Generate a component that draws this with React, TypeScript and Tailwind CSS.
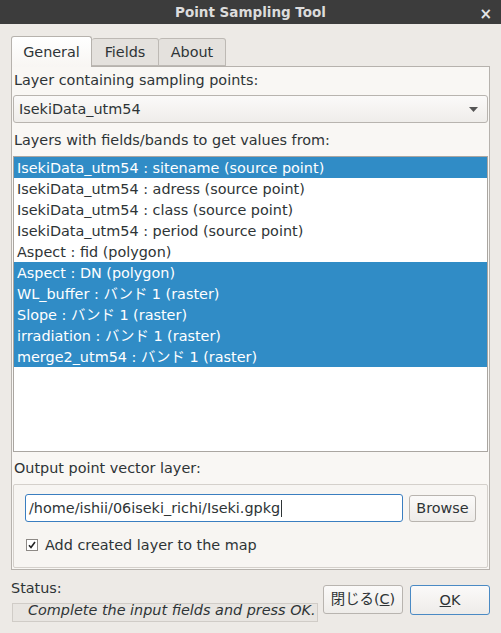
import React from "react";

const ITEMS: { label: string; selected: boolean }[] = [
  { label: "IsekiData_utm54 : sitename (source point)", selected: true },
  { label: "IsekiData_utm54 : adress (source point)", selected: false },
  { label: "IsekiData_utm54 : class (source point)", selected: false },
  { label: "IsekiData_utm54 : period (source point)", selected: false },
  { label: "Aspect : fid (polygon)", selected: false },
  { label: "Aspect : DN (polygon)", selected: true },
  { label: "WL_buffer : バンド 1 (raster)", selected: true },
  { label: "Slope : バンド 1 (raster)", selected: true },
  { label: "irradiation : バンド 1 (raster)", selected: true },
  { label: "merge2_utm54 : バンド 1 (raster)", selected: true },
];

const FONT = "font-['DejaVu_Sans','Noto_Sans_CJK_JP',sans-serif]";

export default function App() {
  return (
    <div className={`w-[501px] h-[633px] bg-[#edeae6] flex flex-col text-[14.4px] text-[#2e3436] ${FONT}`}>
      {/* Title bar */}
      <div className="h-[24px] bg-[#3c3c3c] flex items-center relative shrink-0">
        <div className="flex-1 text-center font-bold text-[#dcdcdc] text-[13.5px]">Point Sampling Tool</div>
        <div className="absolute right-[9px] top-[3px] text-[#e6e6e6] text-[15px] font-bold">×</div>
      </div>

      <div className="px-[11px] pt-[11px] flex flex-col">
        {/* Tabs */}
        <div className="flex items-end h-[31px] pl-0">
          <div className="h-[31px] w-[81px] border border-b-0 border-[#b6b2ad] rounded-t-[3px] bg-gradient-to-b from-[#ffffff] to-[#f8f6f3] flex items-center justify-center relative top-[1px] pt-[2px]">
            General
          </div>
          <div className="h-[28px] w-[67px] border border-l-0 border-[#bdb9b4] rounded-t-[3px] bg-[#e4e1dd] flex items-center justify-center pt-[2px]">
            Fields
          </div>
          <div className="h-[28px] w-[67px] border border-l-0 border-[#bdb9b4] rounded-t-[3px] bg-[#e4e1dd] flex items-center justify-center pt-[2px]">
            About
          </div>
        </div>

        {/* Pane */}
        <div className="h-[504px] border border-[#b6b2ad] bg-[#f9f7f4] px-[1px] flex flex-col">
          <div className="h-[28px] flex items-center pl-[1px]">Layer containing sampling points:</div>
          <div className="h-[28px] border border-[#b8b4af] rounded-[3px] bg-gradient-to-b from-[#fbfaf9] to-[#efedea] flex items-center justify-between pl-[5px] pr-[9px]">
            <span className="pt-[2px]">IsekiData_utm54</span>
            <svg width="9" height="5" viewBox="0 0 9 5">
              <path d="M0 0 L9 0 L4.5 5 Z" fill="#555" />
            </svg>
          </div>
          <div className="h-[33px] flex items-center pl-[1px] pt-[2px]">Layers with fields/bands to get values from:</div>
          <div className="h-[296px] border border-[#aaa6a1] bg-white flex flex-col">
            {ITEMS.map((it) => (
              <div
                key={it.label}
                className={`h-[21px] shrink-0 flex items-center pl-[3px] pt-[2px] ${
                  it.selected ? "bg-[#308cc6] text-white" : "text-[#2e3436]"
                }`}
              >
                {it.label}
              </div>
            ))}
          </div>
          <div className="h-[32px] flex items-center pl-[1px] pt-[2px]">Output point vector layer:</div>
          <div className="h-[84px] border border-[#d4d0cb] rounded-[2px] bg-[#f7f5f2] flex flex-col px-[11px] pt-[9px]">
            <div className="flex items-center gap-[6px]">
              <div className="w-[378px] h-[28px] border border-[#3a7ec0] rounded-[3px] bg-white flex items-center pl-[3px] pt-[1px]">
                <span>/home/ishii/06iseki_richi/Iseki.gpkg</span>
                <span className="w-[1px] h-[17px] bg-[#2e3436] ml-[1px]" />
              </div>
              <div className="w-[67px] h-[27px] border border-[#b8b4af] rounded-[3px] bg-gradient-to-b from-[#fbfaf9] to-[#eeece9] flex items-center justify-center pt-[2px]">
                Browse
              </div>
            </div>
            <div className="flex items-center mt-[11px] ml-[1px] gap-[7px]">
              <div className="w-[12px] h-[12px] border border-[#8d8985] bg-white flex items-center justify-center">
                <svg width="8" height="8" viewBox="0 0 8 8">
                  <path d="M1 4.2 L3 6.5 L7 1" stroke="#222" strokeWidth="1.6" fill="none" />
                </svg>
              </div>
              <span className="pt-[2px]">Add created layer to the map</span>
            </div>
          </div>
        </div>

        {/* Bottom */}
        <div className="flex items-start mt-[6px]">
          <div className="flex flex-col w-[308px]">
            <div className="h-[24px] flex items-end">Status:</div>
            <div className="mt-[3px] ml-[1px] h-[19px] border border-[#d0ccc7] bg-[#e8e5e1] overflow-hidden pl-[15px] italic whitespace-nowrap leading-[13px]">
              Complete the input fields and press OK.
            </div>
          </div>
          <div className="flex gap-[7px] ml-[5px] mt-[9px]">
            <div className="w-[80px] h-[29px] border border-[#b8b4af] rounded-[3px] bg-gradient-to-b from-[#fbfaf9] to-[#eeece9] flex items-center justify-center pt-[1px]">
              閉じる(<span className="underline">C</span>)
            </div>
            <div className="w-[80px] h-[30px] border border-[#4a8ac4] rounded-[3px] bg-gradient-to-b from-[#fbfaf9] to-[#eeece9] flex items-center justify-center pt-[1px]">
              <span className="underline">O</span>K
            </div>
          </div>
        </div>
      </div>
    </div>
  );
}
